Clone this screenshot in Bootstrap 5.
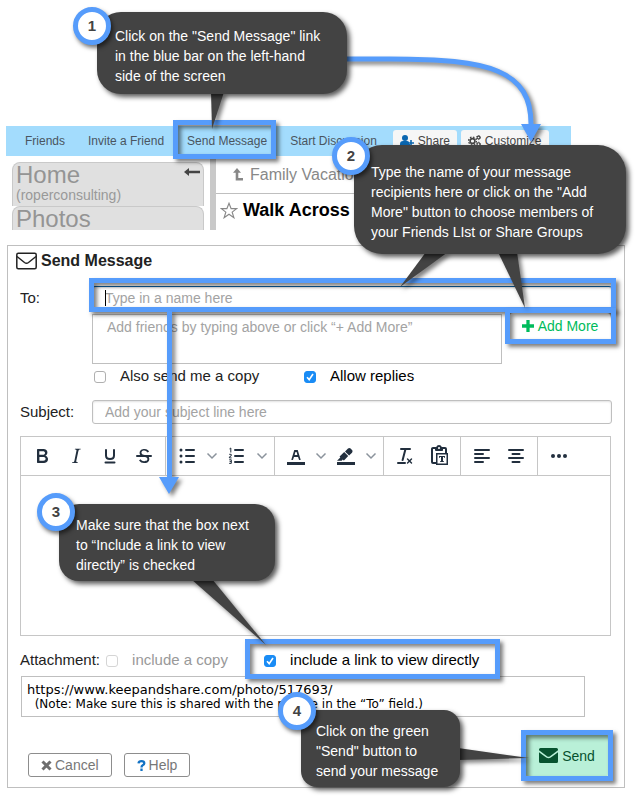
<!DOCTYPE html>
<html lang="en">
<head>
<meta charset="utf-8">
<meta name="viewport" content="width=device-width, initial-scale=1">
<title>Send Message</title>
<link href="https://cdn.jsdelivr.net/npm/bootstrap@5.3.0/dist/css/bootstrap.min.css" rel="stylesheet">
<style>
  :root { --hi: #569cfb; --line: #bfbfbf; --ink: #222f3e; --note: #434343; }
  body { font-family: "Liberation Sans", Arial, sans-serif; font-size: 15px; line-height: 20px; color: #222; background: #fff; }
  .guide { padding: 126px 11px 12px 6px; }
  button { font-family: inherit; }

  /* site header and sidebar preview */
  .site { margin-right: 54px; }
  .site-bar { height: 30px; background: #a3dcfd; font-size: 12px; line-height: 16px; padding-left: 19px; }
  .site-links { gap: 23px; }
  .site-bar a { color: #4a5560; text-decoration: none; }
  .bar-btn { height: 26px; border: 0; border-radius: 3px 3px 0 0; background: #f6f6f6; color: #444; font-size: 12px; line-height: 16px; padding: 0 7px 4px; gap: 4px; margin-top: 4px; }
  .site-body { height: 74px; }
  .side { width: 204px; padding: 6px 6px 0; }
  .side-tab { height: 44px; background: #e0e0e0; border: 1px solid #c9c9c9; border-bottom: 0; border-radius: 8px 8px 0 0; color: #949494; padding: 1px 3px 0; font-size: 24px; line-height: 22px; text-decoration: none; }
  .side-tab small { font-size: 14px; line-height: 18px; color: #999; }
  .site-main { border-left: 6px solid #c9c9c9; color: #888; }
  .crumb { height: 38px; border-bottom: 1px solid var(--line); font-size: 16px; padding-left: 17px; gap: 6px; }
  .page-name { font-size: 18px; color: #000; padding: 6px 0 0 4px; gap: 5px; }

  /* compose panel */
  .compose { margin: 15px 0 0 1px; border: 1px solid var(--line); padding: 5px 12px 10px; }
  .compose-title { font-size: 16px; line-height: 20px; margin: 0 -4px 15px; gap: 4px; }
  .lbl { width: 72px; flex: none; }
  .field { height: 24px; border: 1px solid var(--line); border-radius: 3px; padding: 0 12px; font-size: 14px; line-height: 20px; box-shadow: inset 0 1px 2px rgba(0,0,0,.12); color: #222; }
  .field::placeholder, .friends::placeholder { color: #a3a3a3; opacity: 1; }
  .field:focus, .plain:focus { outline: 0; }
  .field-to { border-top: 1px solid #0a5c9c; caret-color: transparent; }
  .to-wrap::before { content: ""; position: absolute; left: 13px; top: 4px; width: 1px; height: 16px; background: #000; }
  .plain { border: 1px solid var(--line); border-radius: 0; resize: none; display: block; overflow: hidden; background: #fff; }
  .friends { height: 50px; font-size: 14px; line-height: 20px; padding: 2px 14px; }
  .add-more { height: 26px; width: 100px; border: 0; border-radius: 3px; background: #fff; color: #00bb5c; font-size: 14px; line-height: 20px; gap: 4px; margin: -1px 2px 0 8px; }
  .tick { width: 12px; height: 12px; margin: 1px 14px 0 0; border: 1px solid #b0b0b0; border-radius: 3px; appearance: none; background: #fff; flex: none; }
  .tick:checked { border-color: #1a8cf5; background: #1a8cf5 url("data:image/svg+xml,%3Csvg xmlns='http://www.w3.org/2000/svg' viewBox='0 0 10 10'%3E%3Cpath d='M2 5.2 4.2 7.6 8 2' fill='none' stroke='%23fff' stroke-width='1.6'/%3E%3C/svg%3E") center / 10px no-repeat; }
  .tick:disabled { border-color: #d5d5d5; }
  .muted { color: #999; }
  .checks { padding: 2px 0 14px 74px; }
  .copy-me { width: 210px; }
  .editor { border: 1px solid #c6c6c6; margin: 12px 1px 14px 0; color: var(--ink); }
  .tools { border-bottom: 1px solid #c6c6c6; height: 39px; }
  .tool-set { padding: 0 4px; border-right: 1px solid #c6c6c6; }
  .tool-set:last-child { border-right: 0; }
  .tool { width: 34px; border: 0; background: none; padding: 0; color: inherit; }
  .tool.more { width: 16px; color: #8b939c; }
  .tool svg { display: block; margin: auto; }
  .writing { height: 159px; border: 0; }
  .attach { gap: 6px; }
  .attach-copy { width: 152px; }
  .link-text { height: 41px; padding: 5px; margin: 6px 27px 0 1px; font: 13px/15px "DejaVu Sans", Verdana, sans-serif; color: #000; white-space: pre; }
  .link-text p { font-size: 12px; margin: 0; }
  .actions { margin: 13px 4px 0 8px; padding-top: 4px; }
  .act { height: 24px; border: 1px solid #8d8d8d; border-radius: 3px; background: #fff; color: #777; font-size: 14px; line-height: 20px; padding: 0 12px; gap: 3px; }
  .send { width: 82px; height: 43px; border: 0; border-radius: 3px; background: #b9f0d8; color: #07522f; font-size: 14px; gap: 4px; padding: 0; }

  /* highlight frames over the controls they point at */
  .spot::after { content: ""; position: absolute; inset: -8px -4px -2px -3px; border: 5px solid var(--hi); box-shadow: 3px 3px 4px rgba(0,0,0,.5), inset 3px 3px 4px rgba(0,0,0,.5); pointer-events: none; }
  .spot-nav::after { inset: -13px -9px -10px -14px; }
  .spot-add::after { inset: -5px -6px -5px -5px; }
  .spot-link::after { inset: -11px -21px -9px -19px; }
  .spot-send::after { inset: -4px -5px; }
  .z2 { z-index: 2; }

  /* tutorial layer */
  .arrows { left: 0; top: 0; z-index: 3; pointer-events: none; }
  .shade { filter: drop-shadow(3px 3px 2px rgba(0,0,0,.5)); }
  .tip-box { background: var(--note); color: #fff; font-size: 14px; line-height: 20px; border-radius: 24px; box-shadow: 3px 3px 5px rgba(0,0,0,.65); z-index: 4; margin: 0; }
  .tip-num { position: absolute; width: 38px; height: 38px; border: 5px solid var(--hi); border-radius: 50%; background: #fff; color: var(--note); font-weight: bold; font-size: 15px; line-height: 28px; text-align: center; box-shadow: 2px 3px 4px rgba(0,0,0,.55); }
  .tip-1 { left: 97px; top: 12px; width: 250px; padding: 14px 18px 8px; }
  .tip-1 .tip-num { left: -24px; top: -5px; }
  .tip-2 { left: 354px; top: 145px; width: 272px; padding: 17px 17px 12px; border-radius: 28px; }
  .tip-2 .tip-num { left: -22px; top: -8px; }
  .tip-3 { left: 59px; top: 504px; width: 216px; padding: 11px 17px 6px; border-radius: 20px; }
  .tip-3 .tip-num { left: -22px; top: -11px; }
  .tip-4 { left: 301px; top: 710px; width: 159px; padding: 11px 15px 6px; border-radius: 16px; }
  .tip-4 .tip-num { left: -23px; top: -18px; }
</style>
<script src="https://cdn.jsdelivr.net/npm/bootstrap@5.3.0/dist/js/bootstrap.bundle.min.js"></script>
</head>
<body>
<main class="guide position-relative">

  <section class="site" aria-label="Site preview">
    <nav class="site-bar d-flex align-items-center text-nowrap">
      <div class="site-links d-flex me-3">
        <a href="#">Friends</a>
        <a href="#">Invite a Friend</a>
        <a href="#" class="spot spot-nav position-relative">Send Message</a>
        <a href="#">Start Discussion</a>
      </div>
      <div class="d-flex gap-1">
        <button type="button" class="bar-btn d-flex align-items-center">
          <svg width="14" height="12" viewBox="0 0 14 12" fill="#0a66b0" aria-hidden="true"><circle cx="5" cy="3" r="3"/><path d="M0 11V9q0-3 3-3h4q1.500 0 2 1v2h1v2zM10.200 5h1.600v2.200H14v1.600h-2.200V11h-1.600V8.800H8V7.200h2.200z"/></svg>
          Share
        </button>
        <button type="button" class="bar-btn d-flex align-items-center">
          <svg width="13" height="12" viewBox="0 0 13 12" fill="none" stroke="#444" aria-hidden="true"><circle cx="4.500" cy="6" r="2.400" stroke-width="1.600"/><circle cx="4.500" cy="6" r="3.900" stroke-width="1.300" stroke-dasharray="1.600 1.460"/><circle cx="10.500" cy="2.500" r="1.400" stroke-width="1.100"/><circle cx="10.500" cy="2.500" r="2.100" stroke-dasharray="1 1.200"/><circle cx="10.500" cy="9.200" r="1.400" stroke-width="1.100"/><circle cx="10.500" cy="9.200" r="2.100" stroke-dasharray="1 1.200"/></svg>
          Customize
        </button>
      </div>
    </nav>
    <div class="site-body d-flex overflow-hidden">
      <div class="side flex-shrink-0">
        <a href="#" class="side-tab d-flex justify-content-between">
          <span>Home<small class="d-block">(roperconsulting)</small></span>
          <svg class="mt-1" width="16" height="8" viewBox="0 0 16 8" aria-hidden="true"><path d="M0 4 5 0v2.800h11v2.400H5V8z" fill="#444"/></svg>
        </a>
        <a href="#" class="side-tab d-block">Photos</a>
      </div>
      <div class="site-main flex-grow-1">
        <div class="crumb d-flex align-items-center">
          <svg width="11" height="13" viewBox="0 0 11 13" fill="#888" aria-hidden="true"><path d="M4 0 8 4.800H5.300V10H10v2.600H2.700V4.800H0z"/></svg>
          <span>Family Vacation</span>
        </div>
        <div class="page-name d-flex align-items-center fw-bold">
          <svg width="18" height="17" viewBox="0 0 17 16" aria-hidden="true"><path d="m8.500 1.200 2 5h5.200l-4.200 3.300 1.600 5.300-4.600-3.200-4.600 3.200 1.600-5.300L1.300 6.200h5.200z" fill="none" stroke="#888" stroke-width="1.100"/></svg>
          <span>Walk Across</span>
        </div>
      </div>
    </div>
  </section>

  <form class="compose" onsubmit="return false">
    <h1 class="compose-title d-flex align-items-center fw-bold">
      <svg width="21" height="18" viewBox="0 0 21 18" fill="none" stroke="#222" stroke-width="1.500" stroke-linejoin="round" aria-hidden="true"><rect x=".8" y="1.300" width="19.400" height="15.400" rx="1.500"/><path d="M1 4.500 8.500 10.500q2 1.500 4 0L20 4.500"/></svg>
      Send Message
    </h1>

    <div class="d-flex align-items-center">
      <label class="lbl" for="to">To:</label>
      <div class="spot to-wrap position-relative flex-grow-1">
        <input id="to" class="field field-to w-100 d-block" type="text" placeholder="Type in a name here">
      </div>
    </div>

    <div class="d-flex mt-1">
      <span class="lbl"></span>
      <textarea class="plain friends flex-grow-1" aria-label="Friends added" placeholder="Add friends by typing above or click “+ Add More”"></textarea>
      <button type="button" class="add-more spot spot-add z2 position-relative d-flex align-items-center justify-content-center p-0">
        <svg width="12" height="12" viewBox="0 0 11 11" fill="#00bb5c" aria-hidden="true"><path d="M4 0h3v4h4v3H7v4H4V7H0V4h4z"/></svg>
        Add More
      </button>
    </div>

    <div class="checks d-flex text-nowrap">
      <div class="copy-me d-flex align-items-center">
        <input id="copyme" class="tick" type="checkbox"><label for="copyme">Also send me a copy</label>
      </div>
      <div class="d-flex align-items-center text-black">
        <input id="replies" class="tick" type="checkbox" checked><label for="replies">Allow replies</label>
      </div>
    </div>

    <div class="d-flex align-items-center">
      <label class="lbl" for="subject">Subject:</label>
      <input id="subject" class="field flex-grow-1" type="text" placeholder="Add your subject line here">
    </div>

    <div class="editor">
      <div class="tools d-flex" role="toolbar" aria-label="Formatting">
        <div class="tool-set d-flex">
          <button type="button" class="tool" aria-label="Bold"><svg width="24" height="24" fill="currentColor"><path d="M7.800 19c-.3 0-.5 0-.6-.2l-.2-.5V5.700c0-.2 0-.4.2-.5l.6-.2h5c1.500 0 2.700.3 3.500 1 .7.6 1.100 1.400 1.100 2.500a3 3 0 0 1-.6 1.900c-.4.6-1 1-1.600 1.200.4.1.9.3 1.300.6s.8.7 1 1.200c.4.4.5 1 .5 1.600 0 1.300-.4 2.300-1.300 3-.8.7-2.100 1-3.800 1H7.800zm5-8.300c.6 0 1.200-.1 1.600-.5.4-.3.6-.7.6-1.300 0-1.100-.8-1.700-2.300-1.700H9.300v3.500h3.400zm.5 6c.7 0 1.300-.1 1.700-.4.4-.4.6-.9.6-1.500s-.2-1-.7-1.400c-.4-.3-1-.4-2-.4H9.400v3.800h4z"/></svg></button>
          <button type="button" class="tool" aria-label="Italic"><svg width="24" height="24" fill="currentColor"><path d="M16.700 4.700l-.1.900h-.3c-.6 0-1 0-1.400.3-.3.3-.4.6-.5 1.100l-2.100 9.800v.6c0 .5.4.8 1.400.8h.2l-.2.8H8l.2-.8h.2c1.100 0 1.800-.5 2-1.500l2-9.800.1-.5c0-.6-.4-.8-1.400-.8h-.3l.2-.9h5.700z"/></svg></button>
          <button type="button" class="tool" aria-label="Underline"><svg width="24" height="24" fill="none" stroke="currentColor" stroke-width="2" stroke-linecap="round"><path d="M8 6v5.500c0 2 1.600 3.500 4 3.500s4-1.500 4-3.500V6M7.500 18.500h9"/></svg></button>
          <button type="button" class="tool" aria-label="Strikethrough"><svg width="24" height="24" fill="currentColor"><path d="M15.600 8.500c-.5-.7-1-1.100-1.300-1.300-.6-.4-1.300-.6-2-.6-2.700 0-2.800 1.700-2.800 2.100 0 1.600 1.800 2 3.200 2.300 4.400.9 4.600 2.800 4.600 3.900 0 1.400-.7 4.100-5 4.100A6.200 6.200 0 0 1 7 16.400l1.500-1.100c.4.6 1.600 2 3.700 2 1.600 0 2.500-.4 3-1.200.4-.8.3-2-.8-2.600-.7-.4-1.600-.7-2.900-1-1-.2-3.900-.8-3.900-3.600C7.600 6 10.300 5 12.400 5c2.900 0 4.200 1.600 4.700 2.400z"/><path d="M5 11h14a1 1 0 0 1 0 2H5a1 1 0 0 1 0-2z"/></svg></button>
        </div>
        <div class="tool-set d-flex">
          <button type="button" class="tool" aria-label="Bullet list"><svg width="24" height="24" fill="currentColor"><path d="M11 5h8a1 1 0 0 1 0 2h-8a1 1 0 0 1 0-2zm0 6h8a1 1 0 0 1 0 2h-8a1 1 0 0 1 0-2zm0 6h8a1 1 0 0 1 0 2h-8a1 1 0 0 1 0-2z"/><circle cx="6" cy="6" r="1.500"/><circle cx="6" cy="12" r="1.500"/><circle cx="6" cy="18" r="1.500"/></svg></button>
          <button type="button" class="tool more" aria-label="Bullet styles"><svg width="12" height="10" fill="none" stroke="currentColor" stroke-width="1.500"><path d="m1.500 2.500 4.500 4.500 4.500-4.500"/></svg></button>
          <button type="button" class="tool" aria-label="Numbered list"><svg width="24" height="24" fill="currentColor"><path d="M10 17h8a1 1 0 0 1 0 2h-8a1 1 0 0 1 0-2zm0-6h8a1 1 0 0 1 0 2h-8a1 1 0 0 1 0-2zm0-6h8a1 1 0 0 1 0 2h-8a1 1 0 0 1 0-2z"/><path d="M4.500 4.900 5.800 4v4.500M4.200 10.300h2v1.600l-1.800 1v1h2.200M4.200 15.800h2.100v3.600H4.200M4.600 17.600h1.700" fill="none" stroke="currentColor"/></svg></button>
          <button type="button" class="tool more" aria-label="Number styles"><svg width="12" height="10" fill="none" stroke="currentColor" stroke-width="1.500"><path d="m1.500 2.500 4.500 4.500 4.500-4.500"/></svg></button>
        </div>
        <div class="tool-set d-flex">
          <button type="button" class="tool" aria-label="Text colour"><svg width="24" height="24" fill="currentColor"><path d="M3 18h18v3H3zM8.700 16h-.8a.5.500 0 0 1-.5-.6l2.700-9c.1-.3.300-.4.500-.4h2.800c.2 0 .4.100.5.400l2.700 9a.5.500 0 0 1-.5.600h-.8a.5.500 0 0 1-.4-.4l-.7-2.200c0-.3-.3-.4-.5-.4h-3.400c-.2 0-.4.100-.5.400l-.7 2.200c0 .3-.2.400-.4.400zm2.600-7.600l-.6 2a.5.500 0 0 0 .5.600h1.600a.5.500 0 0 0 .5-.6l-.6-2c0-.3-.3-.4-.5-.4h-.4c-.2 0-.4.100-.5.400z"/></svg></button>
          <button type="button" class="tool more" aria-label="Text colours"><svg width="12" height="10" fill="none" stroke="currentColor" stroke-width="1.500"><path d="m1.500 2.500 4.500 4.500 4.500-4.500"/></svg></button>
          <button type="button" class="tool" aria-label="Highlight"><svg width="24" height="24" fill="currentColor"><path d="M3 18h18v3H3z"/><path d="M7.700 16.700H3l3.300-3.300-.7-.8L10.200 8l4 4.100-4 4.200c-.2.200-.6.200-.8 0l-.6-.7-1.100 1.100zm5-7.500L11 7.400l3-2.900a2 2 0 0 1 2.600 0L18 6c.7.7.7 2 0 2.700l-2.900 2.900-1.800-1.800-.5-.6"/></svg></button>
          <button type="button" class="tool more" aria-label="Highlight colours"><svg width="12" height="10" fill="none" stroke="currentColor" stroke-width="1.500"><path d="m1.500 2.500 4.500 4.500 4.500-4.500"/></svg></button>
        </div>
        <div class="tool-set d-flex">
          <button type="button" class="tool" aria-label="Clear formatting"><svg width="24" height="24" fill="currentColor"><path d="M13.200 6a1 1 0 0 1 0 .200l-2.600 10a1 1 0 0 1-1 .8h-.2a.8.800 0 0 1-.8-1l2.600-10H8a1 1 0 1 1 0-2h9a1 1 0 0 1 0 2h-3.800zM5 18h7a1 1 0 0 1 0 2H5a1 1 0 0 1 0-2zm13 1.500L16.500 18 15 19.500a.7.700 0 0 1-1-1l1.500-1.500-1.500-1.500a.7.700 0 0 1 1-1l1.500 1.500 1.500-1.500a.7.700 0 0 1 1 1L17.500 17l1.500 1.500a.7.700 0 0 1-1 1z"/></svg></button>
          <button type="button" class="tool" aria-label="Paste as text"><svg width="24" height="24" fill="currentColor"><path d="M18 9V5h-2v1c0 .6-.4 1-1 1H9a1 1 0 0 1-1-1V5H6v13h3V9h9zM9 20H6a2 2 0 0 1-2-2V5c0-1.100.9-2 2-2h3.200A3 3 0 0 1 12 1a3 3 0 0 1 2.800 2H18a2 2 0 0 1 2 2v4h1v12H9v-1zm1.500-9.500v9h9v-9h-9zM12 3a1 1 0 0 0-1 1c0 .5.4 1 1 1s1-.5 1-1-.4-1-1-1zm0 9h6v2h-.5l-.5-1h-1v4h.8v1h-3.600v-1h.8v-4h-1l-.5 1H12v-2z"/></svg></button>
        </div>
        <div class="tool-set d-flex">
          <button type="button" class="tool" aria-label="Align left"><svg width="24" height="24" fill="none" stroke="currentColor" stroke-width="2" stroke-linecap="round"><path d="M5 6h14M5 10h8M5 14h14M5 18h8"/></svg></button>
          <button type="button" class="tool" aria-label="Align centre"><svg width="24" height="24" fill="none" stroke="currentColor" stroke-width="2" stroke-linecap="round"><path d="M5 6h14M8.500 10h7M5 14h14M8.500 18h7"/></svg></button>
        </div>
        <div class="tool-set d-flex">
          <button type="button" class="tool" aria-label="More tools"><svg width="24" height="24" fill="currentColor"><circle cx="6" cy="12" r="2"/><circle cx="12" cy="12" r="2"/><circle cx="18" cy="12" r="2"/></svg></button>
        </div>
      </div>
      <textarea class="plain writing w-100" aria-label="Message"></textarea>
    </div>

    <div class="attach d-flex align-items-center text-nowrap">
      <span>Attachment:</span>
      <div class="attach-copy d-flex align-items-center">
        <input id="incopy" class="tick" type="checkbox" disabled><label for="incopy" class="muted">include a copy</label>
      </div>
      <div class="spot spot-link position-relative d-flex align-items-center text-black z2">
        <input id="inlink" class="tick" type="checkbox" checked><label for="inlink">include a link to view directly</label>
      </div>
    </div>

    <div class="plain link-text" role="textbox" aria-label="Link text" aria-multiline="true" contenteditable="true">https://www.keepandshare.com/photo/517693/<p>  (Note: Make sure this is shared with the people in the “To” field.)</p></div>

    <div class="actions d-flex align-items-end">
      <button type="button" class="act d-flex align-items-center me-2">
        <svg width="11" height="11" viewBox="0 0 11 11" aria-hidden="true"><path d="m1.500 1.500 8 8m0-8-8 8" stroke="#6d6d6d" stroke-width="3"/></svg>
        Cancel
      </button>
      <button type="button" class="act d-flex align-items-center ms-1">
        <svg width="9" height="11" viewBox="0 0 8 11" fill="none" stroke="#1272c4" stroke-width="2.300" aria-hidden="true"><path d="M1 3.400Q1.300 1.200 4 1.200t2.800 2Q6.800 4.600 5.200 5.300 4 5.900 4 7.400M4 8.600V11"/></svg>
        Help
      </button>
      <button type="submit" class="send spot spot-send position-relative d-flex align-items-center justify-content-center ms-auto">
        <svg width="19" height="15" viewBox="0 0 19 15" fill="#07522f" aria-hidden="true"><path d="M1.500 0h16Q19 0 19 1.500v.8l-8 5.900q-1.500 1-3 0L0 2.300v-.8Q0 0 1.500 0zM0 4.300l7.200 5.300q2.300 1.500 4.600 0L19 4.300v9.200q0 1.500-1.500 1.500h-16Q0 15 0 13.500z"/></svg>
        Send
      </button>
    </div>
  </form>

  <!-- arrows and callout tails -->
  <svg class="arrows position-absolute" width="636" height="801" viewBox="0 0 636 801" aria-hidden="true">
    <g class="shade" fill="#569cfb">
      <path d="M345 59H390C490 59 532 70 531 126" fill="none" stroke="#569cfb" stroke-width="5"/>
      <path d="M521 124h20l-10 18z"/>
      <path d="M167 311h5v166h7l-10 17-10-17h8z"/>
    </g>
    <g class="shade" fill="#434343">
      <path d="M211 92h13l-12 37z"/>
      <path d="M426 252h22l-48 35z"/>
      <path d="M498 252h19l8 56z"/>
      <path d="M191 579h21l54 66z"/>
      <path d="M458 748l71 10-71 2z"/>
    </g>
  </svg>
  <p class="tip-box tip-1 position-absolute"><span class="tip-num">1</span>Click on the "Send Message" link<br>in the blue bar on the left-hand<br>side of the screen</p>
  <p class="tip-box tip-2 position-absolute"><span class="tip-num">2</span>Type the name of your message<br>recipients here or click on the "Add<br>More" button to choose members of<br>your Friends LIst or Share Groups</p>
  <p class="tip-box tip-3 position-absolute"><span class="tip-num">3</span>Make sure that the box next<br>to “Include a link to view<br>directly” is checked</p>
  <p class="tip-box tip-4 position-absolute"><span class="tip-num">4</span>Click on the green<br>"Send" button to<br>send your message</p>
</main>
</body>
</html>
